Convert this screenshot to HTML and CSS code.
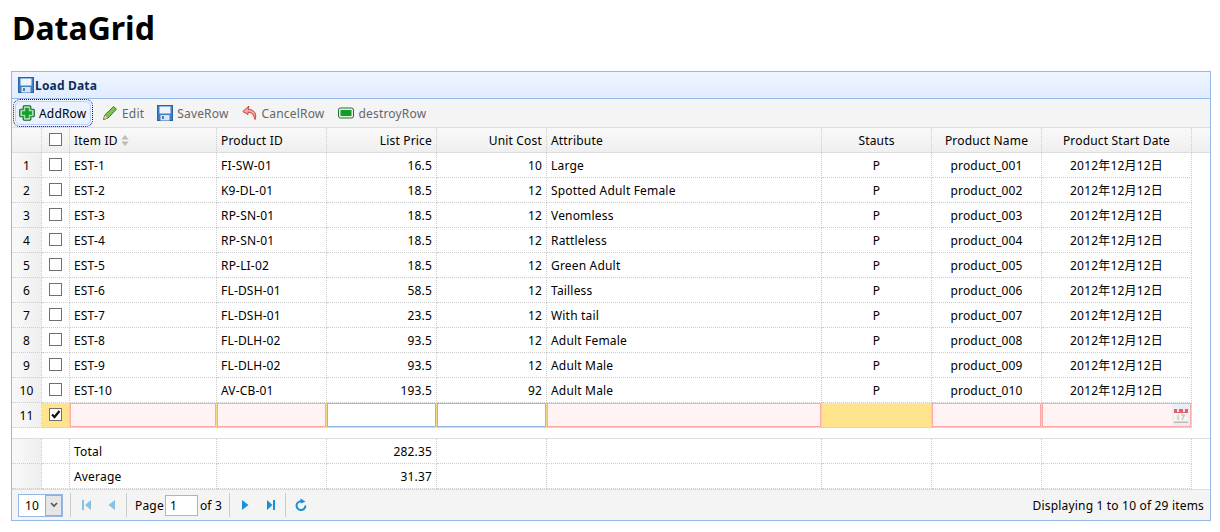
FILE: index.html
```html
<!DOCTYPE html>
<html lang="en">
<head>
  <meta charset="UTF-8">
  <title>DataGrid</title>
  <link rel="stylesheet" href="styles.css">
</head>
<body>
  <h1 class="page-title">DataGrid</h1>

  <div class="panel">
    <div class="panel-title">
      <svg class="icon" viewBox="0 0 16 16"><use href="#i-save"/></svg>
      <span>Load Data</span>
    </div>

    <div class="toolbar">
      <a class="tool-btn active"><svg class="icon" viewBox="0 0 16 16"><use href="#i-add"/></svg><span>AddRow</span></a>
      <a class="tool-btn disabled btn-edit"><svg class="icon" viewBox="0 0 16 16"><use href="#i-edit"/></svg><span>Edit</span></a>
      <a class="tool-btn disabled btn-save"><svg class="icon" viewBox="0 0 16 16"><use href="#i-save"/></svg><span>SaveRow</span></a>
      <a class="tool-btn disabled btn-cancel"><svg class="icon" viewBox="0 0 16 16"><use href="#i-undo"/></svg><span>CancelRow</span></a>
      <a class="tool-btn disabled btn-destroy"><svg class="icon" viewBox="0 0 16 16"><use href="#i-remove"/></svg><span>destroyRow</span></a>
    </div>

    <table class="grid">
      <colgroup>
        <col class="c-num"><col class="c-check"><col class="c-item"><col class="c-std"><col class="c-std"><col class="c-std"><col class="c-attr"><col class="c-std"><col class="c-std"><col class="c-date"><col class="c-fill">
      </colgroup>
      <thead>
        <tr>
          <th class="num"></th>
          <th class="check"><i class="cb"></i></th>
          <th class="left">Item ID <svg class="sort" viewBox="0 0 8 12"><path d="M4 0 8 5H0zM0 7h8l-4 5z"/></svg></th>
          <th class="left">Product ID</th>
          <th class="right">List Price</th>
          <th class="right">Unit Cost</th>
          <th class="left">Attribute</th>
          <th>Stauts</th>
          <th>Product Name</th>
          <th>Product Start Date</th>
          <th class="fill"></th>
        </tr>
      </thead>
      <tbody>
        <tr><td class="num">1</td><td class="check"><i class="cb"></i></td><td>EST-1</td><td>FI-SW-01</td><td class="right">16.5</td><td class="right">10</td><td>Large</td><td class="center">P</td><td class="center">product_001</td><td class="center">2012年12月12日</td><td class="fill"></td></tr>
        <tr><td class="num">2</td><td class="check"><i class="cb"></i></td><td>EST-2</td><td>K9-DL-01</td><td class="right">18.5</td><td class="right">12</td><td>Spotted Adult Female</td><td class="center">P</td><td class="center">product_002</td><td class="center">2012年12月12日</td><td class="fill"></td></tr>
        <tr><td class="num">3</td><td class="check"><i class="cb"></i></td><td>EST-3</td><td>RP-SN-01</td><td class="right">18.5</td><td class="right">12</td><td>Venomless</td><td class="center">P</td><td class="center">product_003</td><td class="center">2012年12月12日</td><td class="fill"></td></tr>
        <tr><td class="num">4</td><td class="check"><i class="cb"></i></td><td>EST-4</td><td>RP-SN-01</td><td class="right">18.5</td><td class="right">12</td><td>Rattleless</td><td class="center">P</td><td class="center">product_004</td><td class="center">2012年12月12日</td><td class="fill"></td></tr>
        <tr><td class="num">5</td><td class="check"><i class="cb"></i></td><td>EST-5</td><td>RP-LI-02</td><td class="right">18.5</td><td class="right">12</td><td>Green Adult</td><td class="center">P</td><td class="center">product_005</td><td class="center">2012年12月12日</td><td class="fill"></td></tr>
        <tr><td class="num">6</td><td class="check"><i class="cb"></i></td><td>EST-6</td><td>FL-DSH-01</td><td class="right">58.5</td><td class="right">12</td><td>Tailless</td><td class="center">P</td><td class="center">product_006</td><td class="center">2012年12月12日</td><td class="fill"></td></tr>
        <tr><td class="num">7</td><td class="check"><i class="cb"></i></td><td>EST-7</td><td>FL-DSH-01</td><td class="right">23.5</td><td class="right">12</td><td>With tail</td><td class="center">P</td><td class="center">product_007</td><td class="center">2012年12月12日</td><td class="fill"></td></tr>
        <tr><td class="num">8</td><td class="check"><i class="cb"></i></td><td>EST-8</td><td>FL-DLH-02</td><td class="right">93.5</td><td class="right">12</td><td>Adult Female</td><td class="center">P</td><td class="center">product_008</td><td class="center">2012年12月12日</td><td class="fill"></td></tr>
        <tr><td class="num">9</td><td class="check"><i class="cb"></i></td><td>EST-9</td><td>FL-DLH-02</td><td class="right">93.5</td><td class="right">12</td><td>Adult Male</td><td class="center">P</td><td class="center">product_009</td><td class="center">2012年12月12日</td><td class="fill"></td></tr>
        <tr><td class="num">10</td><td class="check"><i class="cb"></i></td><td>EST-10</td><td>AV-CB-01</td><td class="right">193.5</td><td class="right">92</td><td>Adult Male</td><td class="center">P</td><td class="center">product_010</td><td class="center">2012年12月12日</td><td class="fill"></td></tr>
        <tr class="editing">
          <td class="num">11</td>
          <td class="check"><i class="cb checked"><svg viewBox="0 0 11 11"><path d="M2 5.5 4.5 8 9.5 2" fill="none" stroke="#111" stroke-width="2.2"/></svg></i></td>
          <td class="edit-cell"><div class="box invalid"></div></td>
          <td class="edit-cell"><div class="box invalid"></div></td>
          <td class="edit-cell"><div class="box"></div></td>
          <td class="edit-cell"><div class="box"></div></td>
          <td class="edit-cell"><div class="box invalid"></div></td>
          <td></td>
          <td class="edit-cell"><div class="box invalid"></div></td>
          <td class="edit-cell">
            <div class="box invalid date-box">
              <svg class="cal" viewBox="0 0 16 18">
                <rect x="1" y="3" width="14" height="14" fill="#f6f4ee"/>
                <rect x="1" y="15.5" width="14" height="1.5" fill="#bdbab0"/>
                <rect x="1" y="3" width="14" height="4" fill="#e4606a"/>
                <rect x="4" y="2" width="2" height="4" fill="#f8e6e6"/>
                <rect x="10" y="2" width="2" height="4" fill="#f8e6e6"/>
                <path d="M5 9v5M8 9h3.5L9 14" fill="none" stroke="#b5b3ac"/>
              </svg>
            </div>
          </td>
          <td class="fill"></td>
        </tr>
      </tbody>
    </table>

    <div class="grid-gap"></div>

    <table class="grid footer-grid">
      <colgroup>
        <col class="c-num"><col class="c-check"><col class="c-item"><col class="c-std"><col class="c-std"><col class="c-std"><col class="c-attr"><col class="c-std"><col class="c-std"><col class="c-date"><col class="c-fill">
      </colgroup>
      <tbody>
        <tr><td class="num"></td><td></td><td>Total</td><td></td><td class="right">282.35</td><td></td><td></td><td></td><td></td><td></td><td class="fill"></td></tr>
        <tr><td class="num"></td><td></td><td>Average</td><td></td><td class="right">31.37</td><td></td><td></td><td></td><td></td><td></td><td class="fill"></td></tr>
      </tbody>
    </table>

    <div class="pager">
      <div class="page-size"><span>10</span><b><svg viewBox="0 0 8 6"><path d="M1 1 4 4 7 1" fill="none" stroke="#555" stroke-width="1.6"/></svg></b></div>
      <i class="sep"></i>
      <svg class="pg-icon faded first" viewBox="0 0 16 16"><path d="M4 3h2v10H4zM13 3v10L7 8z"/></svg>
      <svg class="pg-icon faded prev" viewBox="0 0 16 16"><path d="M11 3v10L4.5 8z"/></svg>
      <i class="sep sep-b"></i>
      <span class="pg-label">Page</span>
      <div class="page-input">1</div>
      <span class="pg-of">of 3</span>
      <i class="sep sep-c"></i>
      <svg class="pg-icon next" viewBox="0 0 16 16"><path d="M5 3v10l6.5-5z"/></svg>
      <svg class="pg-icon last" viewBox="0 0 16 16"><path d="M4 3v10l5.5-5zM10 3h2v10h-2z"/></svg>
      <i class="sep sep-d"></i>
      <svg class="pg-icon refresh" viewBox="0 0 16 16"><path d="M10.5 5A4.4 4.4 0 1 0 12.4 8.5" fill="none" stroke="#1b8fd8" stroke-width="2"/><path d="M7.5 1.5 12.5 4.5 7.5 6.5z"/></svg>
      <span class="pg-info">Displaying 1 to 10 of 29 items</span>
    </div>
  </div>

  <!-- shared icons -->
  <svg class="defs" width="0" height="0">
    <defs>
      <g id="i-save">
        <rect x="0.5" y="0.5" width="15" height="15" fill="#3f7fc4" stroke="#2a62a8"/>
        <rect x="2.5" y="1.5" width="11" height="7" fill="#eef3fa"/>
        <rect x="3.5" y="10" width="9" height="5.5" fill="#dbe6f3"/>
        <rect x="5" y="11" width="2" height="3" fill="#3f7fc4"/>
      </g>
      <g id="i-add">
        <path d="M5 .7h6l.8.8v2.7h2.7l.8.8v6l-.8.8h-2.7v2.7l-.8.8H5l-.8-.8v-2.7H1.5l-.8-.8V5l.8-.8h2.7V1.5z" fill="#a8dfa8" stroke="#1c5e28" stroke-width="1.1"/>
        <path d="M6.2 3h3.6v3.2H13v3.6H9.8V13H6.2V9.8H3V6.2h3.2z" fill="#14a02c"/>
      </g>
      <g id="i-edit">
        <path d="M1.5 14.5 2.8 10 11.5 1.5 14.5 4.2 6 13z" fill="#7cc34a" stroke="#3d7d22"/>
        <path d="M1.5 14.5 2.8 10 6 13z" fill="#f0dcb0" stroke="#8a7a50" stroke-width=".6"/>
      </g>
      <g id="i-undo">
        <path d="M7 1 .8 6.5 6 9.5V7.2c3 0 5.5 1.5 7 7.3 2-5-.2-10-7-10.3z" fill="#f4a6a0" stroke="#c9423c"/>
      </g>
      <g id="i-remove">
        <rect x="0.5" y="3" width="15" height="10" rx="2" fill="#e4f2e4" stroke="#2a6b34"/>
        <rect x="2.5" y="5" width="11" height="6" fill="#129a2a"/>
      </g>
    </defs>
  </svg>
</body>
</html>
```

FILE: styles.css
```css
body {
  margin: 0;
  padding: 0 11px;
  background-color: #fff;
  color: #000;
  font-family: "Noto Sans", "Noto Sans CJK SC", sans-serif;
  font-size: 12px;
  letter-spacing: 0.18px;
}
.page-title {
  margin: 0;
  height: 71px;
  padding-left: 1px;
  box-sizing: border-box;
  font-size: 32px;
  line-height: 56px;
  font-weight: bold;
  letter-spacing: 0;
}
.panel {
  width: 1200px;
  box-sizing: border-box;
  border: 1px solid #95b8e7;
}
.icon {
  width: 16px;
  height: 16px;
  flex: none;
}
.panel-title {
  display: flex;
  align-items: center;
  gap: 1px;
  height: 26px;
  padding-left: 6px;
  background: linear-gradient(to bottom, #eff5ff, #e0ecff);
  border-bottom: 1px solid #95b8e7;
  color: #0e2d5f;
  font-weight: bold;
}
.toolbar {
  display: flex;
  align-items: center;
  height: 28px;
  padding-left: 1px;
  background-color: #f4f4f4;
  border-bottom: 1px solid #ddd;
}
.tool-btn {
  display: flex;
  align-items: center;
  gap: 4px;
  color: #666;
}
.tool-btn.active {
  height: 24px;
  width: 76px;
  padding-left: 3px;
  box-sizing: border-box;
  background-color: #eaf2ff;
  border: 1px solid #b7d2ff;
  border-radius: 5px;
  outline: 1px dotted #00c;
  outline-offset: 1px;
  margin-left: 2px;
  color: #000;
}
.btn-edit { margin-left: 11px; }
.btn-save { margin-left: 13px; }
.btn-cancel { margin-left: 13px; }
.btn-destroy { margin-left: 14px; }

.grid {
  width: 1198px;
  table-layout: fixed;
  border-collapse: separate;
  border-spacing: 0;
}
.c-num { width: 30px; }
.c-check { width: 28px; }
.c-item { width: 147px; }
.c-std { width: 110px; }
.c-attr { width: 275px; }
.c-date { width: 150px; }
.c-fill { width: 18px; }

.grid th,
.grid td {
  height: 24px;
  padding: 0 4px;
  overflow: hidden;
  white-space: nowrap;
  font-weight: normal;
  border-right: 1px dotted #ccc;
  border-bottom: 1px dotted #ccc;
}
.grid th {
  background: linear-gradient(to bottom, #f9f9f9, #efefef);
  border-bottom: 1px solid #ddd;
}
.grid td.fill {
  border: none;
  background: none;
}
.grid th.fill {
  border-right: none;
}
.grid .left { text-align: left; }
.grid .right { text-align: right; }
.grid .center { text-align: center; }
.grid td.num {
  padding: 0;
  text-align: center;
  background: linear-gradient(to right, #f9f9f9, #efefef);
}
.grid .check {
  padding: 0;
  text-align: center;
}
.editing td {
  background-color: #ffe48d;
}
.cb {
  display: block;
  width: 11px;
  height: 11px;
  margin: 0 auto 2px;
  border: 1px solid #707070;
  background-color: #fff;
}
.cb svg {
  display: block;
}
.sort {
  width: 8px;
  height: 11px;
  fill: #bbb;
  vertical-align: -1px;
}
.grid .edit-cell {
  padding: 0;
}
.box {
  height: 24px;
  box-sizing: border-box;
  border: 1px solid #95b8e7;
  background-color: #fff;
}
.box.invalid {
  border-color: #ffa8a8;
  background-color: #fff3f3;
}
.date-box {
  display: flex;
  justify-content: flex-end;
  align-items: center;
}
.cal {
  width: 18px;
  height: 22px;
  padding: 2px 1px;
  box-sizing: border-box;
  background-color: #e9eefa;
}
.grid-gap {
  height: 10px;
  border-bottom: 1px solid #ddd;
}
.pager {
  display: flex;
  align-items: center;
  height: 30px;
  padding-left: 6px;
  background-color: #f4f4f4;
  border-top: 1px solid #ddd;
}
.page-size {
  display: flex;
  width: 45px;
  height: 23px;
  box-sizing: border-box;
  border: 1px solid #95b8e7;
  background-color: #fff;
}
.page-size span {
  flex: 1;
  line-height: 22px;
  padding-left: 6px;
}
.page-size b {
  display: flex;
  align-items: center;
  justify-content: center;
  width: 17px;
  box-sizing: border-box;
  background-color: #e6e6e6;
  border: 1px solid #aaa;
}
.page-size svg {
  width: 8px;
  height: 6px;
}
.sep {
  width: 1px;
  height: 24px;
  margin-left: 7px;
  background-color: #ccc;
}
.pg-icon {
  width: 16px;
  height: 16px;
  fill: #1b8fd8;
}
.pg-icon.faded {
  opacity: 0.5;
}
.first { margin-left: 7px; }
.prev { margin-left: 10px; }
.sep-b { margin-left: 6px; }
.pg-label { margin-left: 8px; }
.page-input {
  width: 33px;
  height: 21px;
  margin-left: 1px;
  padding-left: 4px;
  box-sizing: border-box;
  border: 1px solid #95b8e7;
  background-color: #fff;
  line-height: 20px;
}
.pg-of { margin-left: 2px; }
.sep-c { margin-left: 7px; }
.next { margin-left: 7px; }
.last { margin-left: 10px; }
.sep-d { margin-left: 6px; }
.refresh { margin-left: 7px; }
.pg-info {
  margin-left: auto;
  padding-right: 6px;
}
.defs {
  position: absolute;
}
```
